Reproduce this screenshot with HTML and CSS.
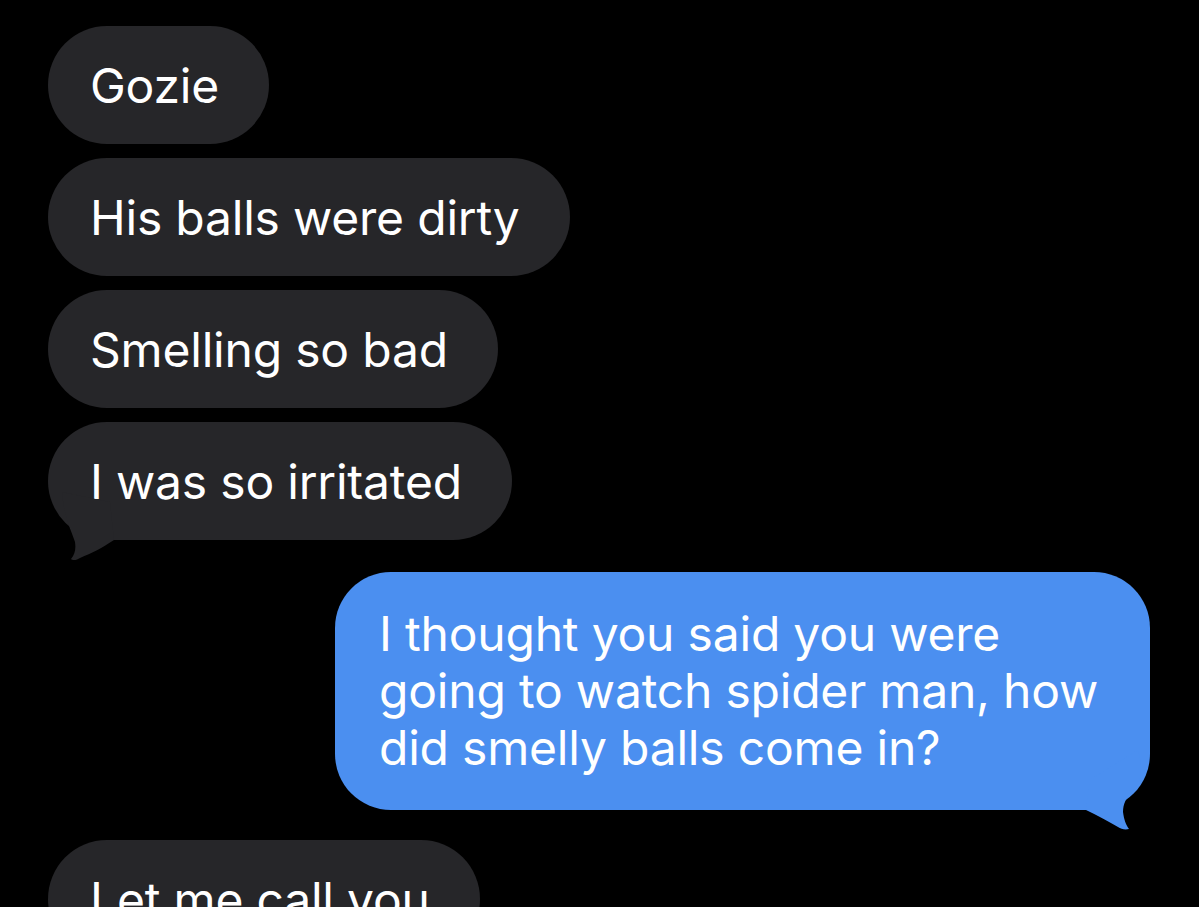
FILE: index.html
```html
<!DOCTYPE html>
<html lang="en">
<head>
<meta charset="utf-8">
<title>Messages</title>
<link rel="stylesheet" href="styles.css">
</head>
<body>
<main class="thread">
  <div class="bubble in">Gozie</div>
  <div class="bubble in">His balls were dirty</div>
  <div class="bubble in">Smelling so bad</div>
  <div class="bubble in last">I was so irritated
    <svg class="tail tail-in" width="80" height="140" viewBox="0 0 80 140" aria-hidden="true">
      <path d="M14 70 C16 96 24 110 27 120 C28 127 27 132 23 137 C25 139 29 138 32 136 C44 131 54 126 66 118 L62 80 Z" />
    </svg>
  </div>
  <div class="bubble out">I thought you said you were<br>going to watch spider man, how<br>did smelly balls come in?
    <svg class="tail tail-out" width="70" height="90" viewBox="0 0 70 90" aria-hidden="true">
      <path d="M10 40 L58 10 C64 30 60 44 52 52 C46 58 43 64 43 72 C44 80 46 85 49 89 C45 90 41 89 38 87 C28 81 18 76 6 70 Z" />
    </svg>
  </div>
  <div class="bubble in">Let me call you</div>
</main>
</body>
</html>
```
FILE: styles.css
```css
html, body {
  margin: 0;
  padding: 0;
  background: #000;
}
body {
  width: 1199px;
  height: 907px;
  overflow: hidden;
  font-family: Inter, "Liberation Sans", Arial, sans-serif;
}
.thread {
  display: flex;
  flex-direction: column;
  align-items: flex-start;
  gap: 14px;
  padding: 26px 49px 0 48px;
}
.bubble {
  position: relative;
  box-sizing: border-box;
  color: #fff;
  font-size: 48px;
  line-height: 57px;
  letter-spacing: -0.2px;
  padding: 31px 50px 30px 42px;
  border-radius: 59px;
  white-space: nowrap;
}
.in {
  background: #262629;
}
.in .tail path { fill: #262629; }
.last {
  margin-bottom: 18px;
}
.out {
  align-self: flex-end;
  background: #4b8ff0;
  padding: 33px 52px 34px 44px;
  border-radius: 56px;
  margin-bottom: 16px;
}
.out .tail path { fill: #4b8ff0; }
.tail {
  position: absolute;
  overflow: visible;
}
.tail-in {
  left: 0;
  top: 0;
}
.tail-out {
  right: 0;
  bottom: -20px;
}
```
